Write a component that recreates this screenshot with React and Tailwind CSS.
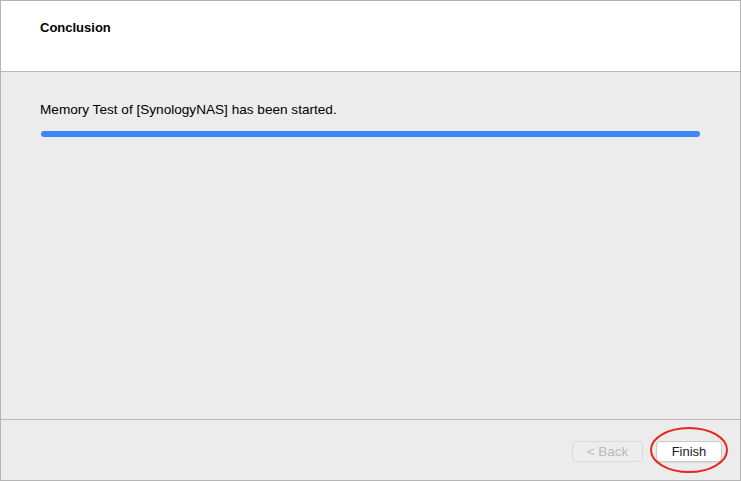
export default function App() {
  return (
    <div
      className="w-[741px] h-[481px] flex flex-col border border-[#b4b4b4] bg-[#ececec] text-[13px] text-[#1d1d1d]"
      style={{ fontFamily: '"Liberation Sans", Arial, sans-serif' }}
    >
      {/* Header */}
      <div className="h-[71px] shrink-0 bg-white border-b border-[#b9b9b9] pl-[39px] pt-[19px]">
        <h1 className="font-bold leading-4 text-[13px] text-black">Conclusion</h1>
      </div>

      {/* Body */}
      <div className="flex-1 px-[40px] pt-[30px]">
        <p className="leading-4 -ml-px text-[13.6px] text-black">
          Memory Test of [SynologyNAS] has been started.
        </p>
        <div className="mt-[13px] h-[6px] rounded-full bg-[#3c87f5]" />
      </div>

      {/* Footer */}
      <div className="h-[61px] shrink-0 border-t border-[#b9b9b9] flex justify-end items-start pt-[21px] pr-[18px] gap-[13px]">
        <button
          disabled
          className="w-[71px] h-[21px] rounded-[4px] border border-[#dadada] bg-[#ededed] text-[#b9b9b9] text-[13.5px] leading-none"
        >
          &lt; Back
        </button>
        <div className="relative">
          <button className="w-[66px] h-[21px] rounded-[4px] border border-[#c9c9c9] bg-white text-[#222] leading-none shadow-[0_1px_1px_rgba(0,0,0,0.08)]">
            Finish
          </button>
          <svg
            className="absolute left-[-6px] top-[-14px] pointer-events-none"
            width="78"
            height="46"
            viewBox="0 0 78 46"
          >
            <ellipse cx="39" cy="23" rx="38" ry="22" fill="none" stroke="#e8261c" strokeWidth="2" />
          </svg>
        </div>
      </div>
    </div>
  );
}
